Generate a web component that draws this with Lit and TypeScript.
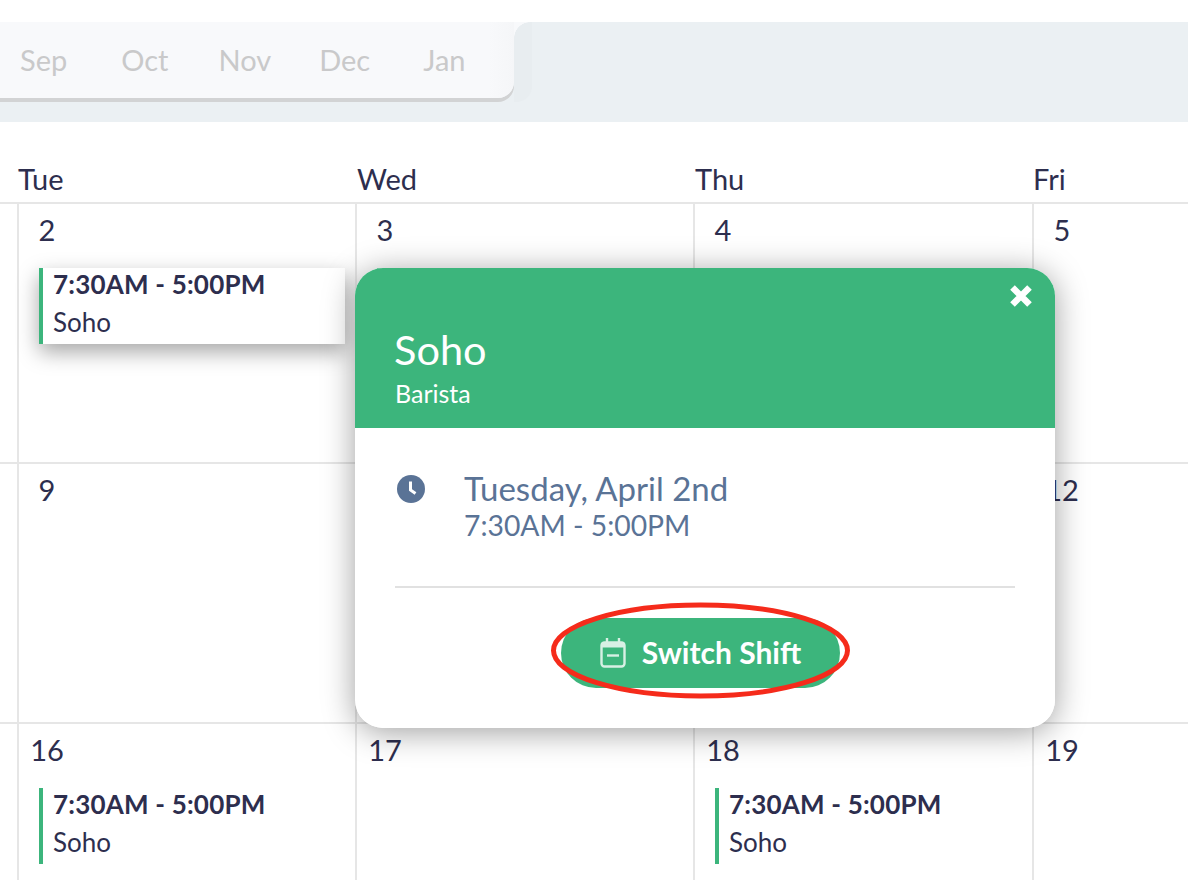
import { LitElement, html, css } from "lit";
import { customElement } from "lit/decorators.js";

type Ev = { place?: string; time?: string; lifted?: boolean };
type Cell = { n?: number; ev?: Ev };

const T = "7:30AM - 5:00PM";
const rows: Cell[][] = [
  [{ n: 2, ev: { place: "Soho", time: T, lifted: true } }, { n: 3, ev: {} }, { n: 4 }, { n: 5 }],
  [{ n: 9 }, {}, {}, { n: 12 }],
  [{ n: 16, ev: { place: "Soho", time: T } }, { n: 17 }, { n: 18, ev: { place: "Soho", time: T } }, { n: 19 }],
];

@customElement("app-root")
export class AppRoot extends LitElement {
  static styles = css`
    :host {
      display: block;
      position: relative;
      width: 1188px;
      height: 880px;
      overflow: hidden;
      background: #fff;
      font-family: "Lato", "Noto Sans", sans-serif;
      color: #2d2e4e;
    }
    .band {
      margin-top: 22px;
      height: 100px;
      background: #ebf0f3;
      display: flow-root;
    }
    .tabs {
      position: relative;
      width: 514px;
      height: 76px;
      box-sizing: border-box;
      background: linear-gradient(90deg, #f8f9fb 95%, #f5f6f8);
      border-radius: 0 0 16px 0;
      box-shadow: 0 4px 0 #d2d3d4;
      display: flex;
      align-items: center;
      gap: 51px;
      padding: 0 0 2px 20px;
      font-size: 29px;
      color: #c9c9ca;
    }
    .tabs span:nth-child(2) { margin-left: 3px; }
    .tabs span:nth-child(3) { margin-left: -1px; }
    .tabs span:nth-child(4) { margin-left: -3px; }
    .tabs span:nth-child(5) { margin-left: 2px; }
    .tabs::after {
      content: "";
      position: absolute;
      left: 100%;
      top: 0;
      width: 18px;
      height: 80px;
      border-radius: 0 0 16px 0;
      background:
        radial-gradient(circle at 16px 16px, #e8edf0 15.5px, #f8f9fb 16px) 0 0 / 16px 16px no-repeat,
        linear-gradient(#e8edf0, #e8edf0);
    }
    .head {
      display: grid;
      grid-template-columns: 18px 339px 338px 338px 155px;
      height: 80px;
      box-sizing: border-box;
      padding-top: 41px;
      font-size: 29px;
      line-height: 32px;
    }
    .head span:first-child { grid-column: 2; }
    .week {
      display: grid;
      grid-template-columns: 18px 338px 338px 339px 155px;
      height: 260px;
      border-top: 2px solid #e6e6e6;
      box-sizing: border-box;
    }
    .edge { min-width: 0; }
    .cell {
      border-left: 2px solid #e6e6e6;
      margin-left: -1px;
      padding: 7px 0 0 0;
      min-width: 0;
    }
    .num {
      width: 56px;
      height: 38px;
      text-align: center;
      font-size: 29px;
      line-height: 38px;
    }
    .ev {
      margin: 19px 11px 0 20px;
      height: 76px;
      box-sizing: border-box;
      border-left: 4px solid #3cb57c;
      padding-left: 10px;
      background: #fff;
    }
    .ev.lifted { box-shadow: 0 8px 20px rgba(0, 0, 0, 0.35); }
    .ev b { display: block; font-size: 26px; letter-spacing: 0.2px; line-height: 33px; font-weight: 700; }
    .ev span { display: block; font-size: 26px; line-height: 42px; }
    .pop {
      position: absolute;
      left: 355px;
      top: 268px;
      width: 700px;
      height: 460px;
      background: #fff;
      border-radius: 28px;
      overflow: hidden;
      display: flex;
      flex-direction: column;
    }
    .shadow {
      position: absolute;
      left: 355px;
      top: 268px;
      width: 700px;
      height: 460px;
      border-radius: 28px;
      box-shadow: 0 4px 32px rgba(0, 0, 0, 0.38);
    }
    .top {
      position: relative;
      height: 160px;
      box-sizing: border-box;
      background: #3cb57c;
      color: #fff;
      padding: 55px 40px 0;
    }
    .top h2 { margin: 0 0 1px -1px; font-weight: 400; font-size: 41.5px; line-height: 52px; }
    .top p { margin: 0; font-size: 25px; line-height: 34px; }
    .x { position: absolute; right: 22px; top: 16px; width: 24px; height: 24px; }
    .body { padding: 39px 40px 0; }
    .when { display: flex; gap: 38px; color: #5a7396; height: 119px; border-bottom: 2px solid #e1e1e1; }
    .clock { width: 30px; height: 30px; margin: 7px 0 0 1px; flex: none; }
    .date { font-size: 33px; line-height: 42px; }
    .hour { font-size: 28.3px; line-height: 33px; }
    .actions { display: flex; justify-content: center; padding-top: 30px; }
    .btn {
      width: 279px;
      height: 70px;
      border-radius: 35px;
      background: #3cb57c;
      color: #fff;
      display: flex;
      align-items: center;
      justify-content: center;
      gap: 16px;
      font-size: 30px;
      font-weight: 700;
      margin-left: -9px;
    }
    .btn span { padding-bottom: 3px; }
    .cal { width: 26px; height: 30px; flex: none; margin-bottom: 1px; }
    .ring { position: absolute; left: 548px; top: 600px; width: 305px; height: 101px; pointer-events: none; }
  `;

  private cell(c: Cell) {
    return html`<div class="cell">
      <div class="num">${c.n ?? ""}</div>
      ${c.ev
        ? html`<div class="ev ${c.ev.lifted ? "lifted" : ""}"><b>${c.ev.time ?? ""}</b><span>${c.ev.place ?? ""}</span></div>`
        : ""}
    </div>`;
  }

  render() {
    return html`
      <div class="band">
        <div class="tabs">${["Sep", "Oct", "Nov", "Dec", "Jan"].map((m) => html`<span>${m}</span>`)}</div>
      </div>
      <div class="head">
        ${["Tue", "Wed", "Thu", "Fri"].map((d) => html`<span>${d}</span>`)}
      </div>
      ${rows.map(
        (r) => html`<div class="week"><div class="edge"></div>${r.map((c) => this.cell(c))}</div>`
      )}
      <div class="shadow"></div>
      <div class="pop">
        <div class="top">
          <svg class="x" viewBox="0 0 24 24">
            <path d="M3.5 3.5 L20.5 20.5 M20.5 3.5 L3.5 20.5" stroke="#fff" stroke-width="6.5" />
          </svg>
          <h2>Soho</h2>
          <p>Barista</p>
        </div>
        <div class="body">
          <div class="when">
            <svg class="clock" viewBox="0 0 30 30">
              <circle cx="15" cy="15" r="14" fill="#5a7396" />
              <path d="M14.5 7.5 V16 L19.5 19.5" stroke="#fff" stroke-width="3" fill="none" />
            </svg>
            <div>
              <div class="date">Tuesday, April 2nd</div>
              <div class="hour">${T}</div>
            </div>
          </div>
          <div class="actions">
            <div class="btn">
              <svg class="cal" viewBox="0 0 26 30" fill="none" stroke="#d7f0e4" stroke-width="2.4">
                <rect x="1.5" y="4.5" width="23" height="24" rx="3" />
                <path d="M1.5 7 H24.5" stroke-width="5" />
                <path d="M7 0 V5 M19 0 V5" />
                <path d="M7 17.5 H19" />
              </svg>
              <span>Switch Shift</span>
            </div>
          </div>
        </div>
      </div>
      <svg class="ring" viewBox="0 0 305 101">
        <ellipse cx="152.5" cy="50.5" rx="147" ry="45.5" fill="none" stroke="#f52b1b" stroke-width="5" />
      </svg>
    `;
  }
}
